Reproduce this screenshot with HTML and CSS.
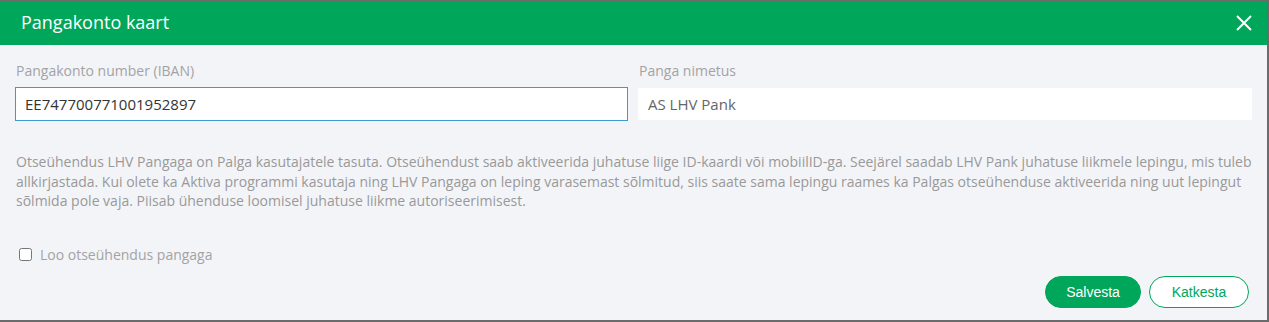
FILE: index.html
```html
<!DOCTYPE html>
<html lang="et">
<head>
  <meta charset="UTF-8">
  <title>Pangakonto kaart</title>
  <link rel="stylesheet" href="styles.css">
</head>
<body>

<div class="modal">
  <div class="modal-header">
    <h1>Pangakonto kaart</h1>
    <button class="close-btn" aria-label="Sulge">
      <svg width="16" height="16" viewBox="0 0 16 16">
        <path d="M1 1 L15 15 M15 1 L1 15" stroke="#fff" stroke-width="2" fill="none"/>
      </svg>
    </button>
  </div>

  <div class="modal-body">
    <div class="fields">
      <div class="field">
        <label>Pangakonto number (IBAN)</label>
        <input type="text" class="input input-focus" value="EE747700771001952897">
      </div>
      <div class="field">
        <label>Panga nimetus</label>
        <input type="text" class="input" value="AS LHV Pank" readonly>
      </div>
    </div>

    <p class="info">Otseühendus LHV Pangaga on Palga kasutajatele tasuta. Otseühendust saab aktiveerida juhatuse liige ID-kaardi või mobiilID-ga. Seejärel saadab LHV Pank juhatuse liikmele lepingu, mis tuleb allkirjastada. Kui olete ka Aktiva programmi kasutaja ning LHV Pangaga on leping varasemast sõlmitud, siis saate sama lepingu raames ka Palgas otseühenduse aktiveerida ning uut lepingut sõlmida pole vaja. Piisab ühenduse loomisel juhatuse liikme autoriseerimisest.</p>

    <label class="check">
      <input type="checkbox">
      <span>Loo otseühendus pangaga</span>
    </label>

    <div class="actions">
      <button class="btn btn-primary">Salvesta</button>
      <button class="btn btn-outline">Katkesta</button>
    </div>
  </div>
</div>

</body>
</html>
```

FILE: styles.css
```css
html, body {
  margin: 0;
  padding: 0;
}
body {
  font-family: 'Open Sans', sans-serif;
  background-color: #f3f4f8;
  width: 1269px;
  height: 322px;
  overflow: hidden;
}
.modal {
  box-sizing: border-box;
  width: 1269px;
  height: 322px;
  border-top: 1px solid #6b6b6b;
  border-right: 2px solid #6b6b6b;
  border-bottom: 2px solid #6b6b6b;
  background-color: #f3f4f8;
  display: flex;
  flex-direction: column;
}
.modal-header {
  height: 44px;
  background-color: #00a65a;
  display: flex;
  align-items: center;
  justify-content: space-between;
  padding: 0 14px 0 21px;
  flex-shrink: 0;
}
.modal-header h1 {
  margin: 0;
  font-size: 18px;
  font-weight: 400;
  color: #fff;
  position: relative;
  top: -1px;
}
.close-btn {
  background: none;
  border: none;
  padding: 0;
  width: 18px;
  height: 18px;
  display: flex;
  align-items: center;
  justify-content: center;
  cursor: pointer;
}
.modal-body {
  padding: 17px 15px 0 15px;
  display: flex;
  flex-direction: column;
  flex: 1;
}
.fields {
  display: grid;
  grid-template-columns: 613px 614px;
  gap: 10px;
}
.field {
  display: flex;
  flex-direction: column;
}
.field label {
  font-size: 14px;
  color: #a3a3a3;
  padding-left: 1px;
  height: 18px;
  line-height: 18px;
  margin-bottom: 7px;
}
.input {
  box-sizing: border-box;
  height: 32px;
  margin: 1px 0;
  border: none;
  background-color: #fff;
  font-family: 'Open Sans', sans-serif;
  font-size: 15px;
  color: #666;
  padding: 0 10px;
  outline: none;
}
.input-focus {
  height: 34px;
  margin: 0;
  border: 1px solid #3a9bd0;
  padding: 0 9px;
  color: #333;
}
.info {
  margin: 31px 0 0 1px;
  font-size: 14px;
  line-height: 19.5px;
  color: #999;
}
.check {
  display: flex;
  align-items: center;
  gap: 8px;
  margin: 34px 0 0 4px;
  font-size: 14px;
  color: #a3a3a3;
}
.check input {
  margin: 0;
  width: 13px;
  height: 13px;
}
.actions {
  display: flex;
  justify-content: flex-end;
  gap: 8px;
  margin-top: 12px;
  padding-right: 3px;
}
.btn {
  box-sizing: border-box;
  height: 32px;
  border-radius: 16px;
  font-family: 'Liberation Sans', Arial, sans-serif;
  font-size: 14px;
  cursor: pointer;
  padding: 0;
}
.btn-primary {
  width: 96px;
  background-color: #00a65a;
  border: 1px solid #00a65a;
  color: #fff;
}
.btn-outline {
  width: 100px;
  background-color: #fff;
  border: 1px solid #00a65a;
  color: #00a65a;
}
```
